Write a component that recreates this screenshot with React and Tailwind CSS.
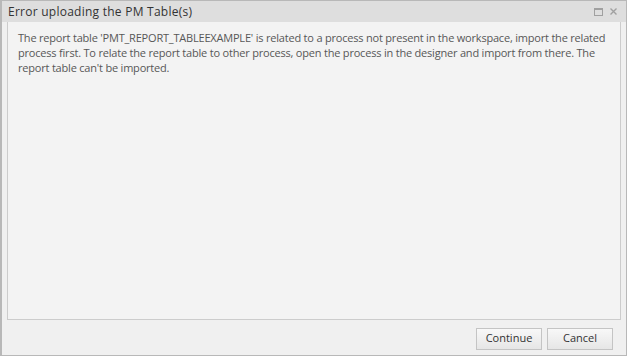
export default function App() {
  return (
    <div
      className="w-[627px] h-[356px] flex flex-col bg-[#f0f0f0] border border-[#b8b8b8] border-l-2 overflow-hidden"
      style={{ fontFamily: '"Open Sans", "Liberation Sans", sans-serif' }}
    >
      {/* Header */}
      <div className="h-[21px] flex items-center justify-between bg-[#dedede] pl-[6px] pr-[9px] shrink-0">
        <span className="text-[12px] tracking-[0.25px] text-[#333333] leading-none">Error uploading the PM Table(s)</span>
        <div className="flex items-center gap-[7px]">
          <svg width="9" height="8" viewBox="0 0 9 8">
            <rect x="0.5" y="0.5" width="8" height="7" fill="none" stroke="#a0a0a0" />
            <line x1="0" y1="1.5" x2="9" y2="1.5" stroke="#a0a0a0" />
          </svg>
          <svg width="7" height="7" viewBox="0 0 7 7">
            <path d="M0.5 0.5 L6.5 6.5 M6.5 0.5 L0.5 6.5" stroke="#a0a0a0" strokeWidth="1.4" />
          </svg>
        </div>
      </div>

      {/* Body */}
      <div className="flex-1 flex flex-col px-[5px]">
        <div className="flex-1 bg-[#f3f3f3] border border-[#cccccc] border-t-0 pl-[10px] pr-[10px] pt-[8px]">
          <p className="text-[11px] tracking-[-0.2px] leading-[15px] text-[#575757]">
            The report table 'PMT_REPORT_TABLEEXAMPLE' is related to a process not present in the workspace, import the related
            process first. To relate the report table to other process, open the process in the designer and import from there. The
            report table can't be imported.
          </p>
        </div>

        {/* Footer */}
        <div className="h-[35px] flex items-center justify-end gap-[5px] pr-[8px] pt-[2px]">
          <button className="w-[66px] h-[22px] border border-[#c4c4c4] bg-gradient-to-b from-[#f8f8f8] to-[#e6e6e6] text-[11px] text-[#333333]">
            Continue
          </button>
          <button className="w-[66px] h-[22px] border border-[#c4c4c4] bg-gradient-to-b from-[#f8f8f8] to-[#e6e6e6] text-[11px] text-[#333333]">
            Cancel
          </button>
        </div>
      </div>
    </div>
  );
}
